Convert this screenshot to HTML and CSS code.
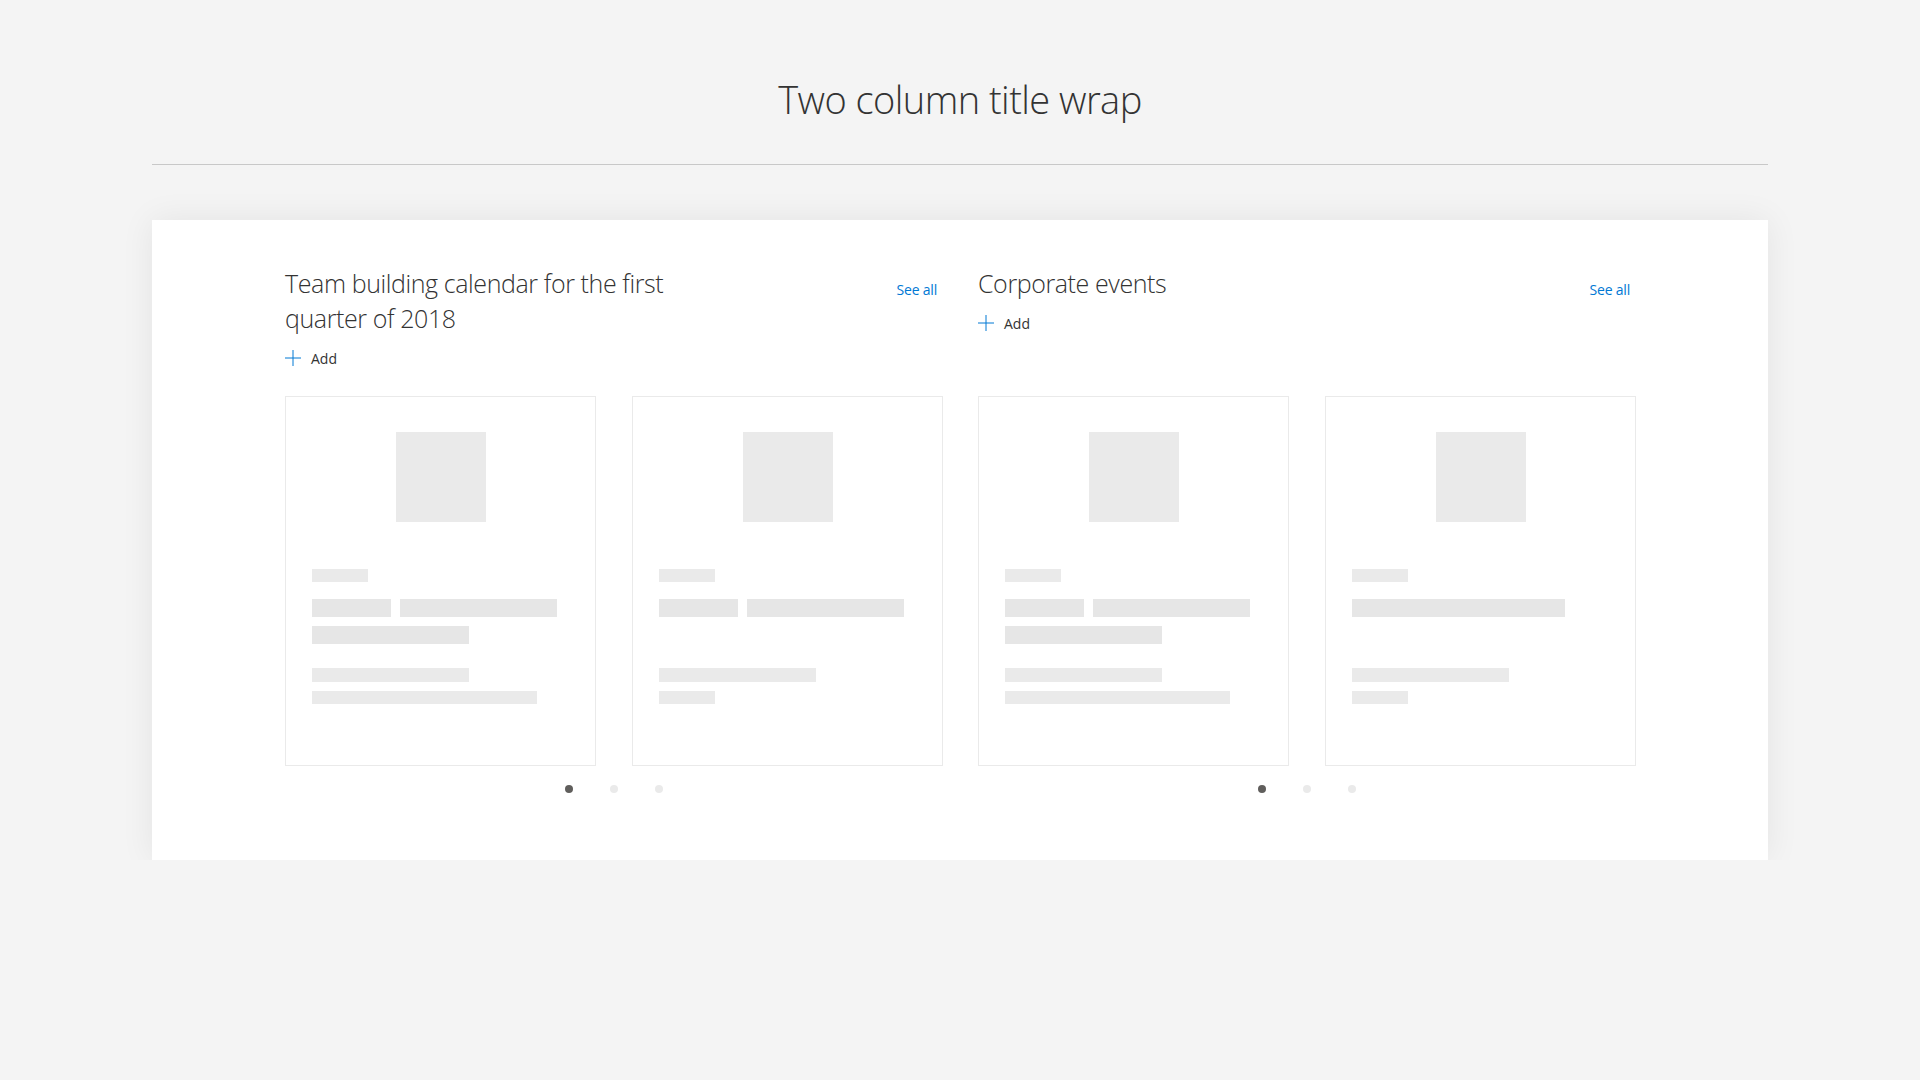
FILE: index.html
```html
<!DOCTYPE html>
<html lang="en">
<head>
<meta charset="utf-8">
<title>Two column title wrap</title>
<link rel="stylesheet" href="styles.css">
</head>
<body>
<div class="page">
  <h1 class="page-title">Two column title wrap</h1>
  <div class="divider"></div>
  <main class="canvas">
    <div class="columns">
      <header class="section-head">
        <div class="head-main">
          <h2 class="section-title wrap">Team building calendar for the first quarter of 2018</h2>
          <button class="add-btn" type="button">
            <svg class="plus" width="16" height="16" viewBox="0 0 16 16" aria-hidden="true"><path d="M8 0V16M0 8H16" stroke="#0078d4" stroke-width="1" fill="none"/></svg>
            <span>Add</span>
          </button>
        </div>
        <a class="see-all" href="#">See all</a>
      </header>
      <header class="section-head">
        <div class="head-main">
          <h2 class="section-title">Corporate events</h2>
          <button class="add-btn" type="button">
            <svg class="plus" width="16" height="16" viewBox="0 0 16 16" aria-hidden="true"><path d="M8 0V16M0 8H16" stroke="#0078d4" stroke-width="1" fill="none"/></svg>
            <span>Add</span>
          </button>
        </div>
        <a class="see-all" href="#">See all</a>
      </header>

      <section class="section-body">
        <div class="cards">
          <div class="card">
            <div class="thumb"></div>
            <div class="lines">
              <div class="row r1"><span class="bar sm w56"></span></div>
              <div class="row r2"><span class="bar lg w79"></span><span class="bar lg w157"></span></div>
              <div class="row r3"><span class="bar lg w157"></span></div>
              <div class="row r4"><span class="bar sm w157"></span></div>
              <div class="row r5"><span class="bar sm w225"></span></div>
            </div>
          </div>
          <div class="card">
            <div class="thumb"></div>
            <div class="lines">
              <div class="row r1"><span class="bar sm w56"></span></div>
              <div class="row r2"><span class="bar lg w79"></span><span class="bar lg w157"></span></div>
              <div class="row r3"></div>
              <div class="row r4"><span class="bar sm w157"></span></div>
              <div class="row r5"><span class="bar sm w56"></span></div>
            </div>
          </div>
        </div>
        <div class="dots"><span class="dot active"></span><span class="dot"></span><span class="dot"></span></div>
      </section>

      <section class="section-body">
        <div class="cards">
          <div class="card">
            <div class="thumb"></div>
            <div class="lines">
              <div class="row r1"><span class="bar sm w56"></span></div>
              <div class="row r2"><span class="bar lg w79"></span><span class="bar lg w157"></span></div>
              <div class="row r3"><span class="bar lg w157"></span></div>
              <div class="row r4"><span class="bar sm w157"></span></div>
              <div class="row r5"><span class="bar sm w225"></span></div>
            </div>
          </div>
          <div class="card">
            <div class="thumb"></div>
            <div class="lines">
              <div class="row r1"><span class="bar sm w56"></span></div>
              <div class="row r2"><span class="bar lg w213"></span></div>
              <div class="row r3"></div>
              <div class="row r4"><span class="bar sm w157"></span></div>
              <div class="row r5"><span class="bar sm w56"></span></div>
            </div>
          </div>
        </div>
        <div class="dots"><span class="dot active"></span><span class="dot"></span><span class="dot"></span></div>
      </section>
    </div>
  </main>
</div>
</body>
</html>
```

FILE: styles.css
```css
* { box-sizing: border-box; }

html, body {
  margin: 0;
  padding: 0;
  background: #f4f4f4;
}

body {
  font-family: "Segoe UI", "Open Sans", "Noto Sans", sans-serif;
  color: #333333;
}

.page {
  width: 1616px;
  margin: 0 auto;
  padding-top: 71px;
}

.page-title {
  margin: 0;
  text-align: center;
  font-size: 38px;
  line-height: 56px;
  font-weight: 300;
  letter-spacing: -0.55px;
  color: #333333;
}

.divider {
  margin-top: 37px;
  height: 1px;
  background: #c8c8c8;
}

.canvas {
  margin-top: 55px;
  background: #ffffff;
  box-shadow: 0 0 32px rgba(0, 0, 0, 0.07);
  padding: 46px 132px 67px 133px;
}

.columns {
  display: grid;
  grid-template-columns: 658px 658px;
  column-gap: 35px;
  row-gap: 28px;
}

.section-head {
  display: flex;
  justify-content: space-between;
  align-items: flex-start;
}

.head-main {
  display: flex;
  flex-direction: column;
  align-items: flex-start;
}

.section-title {
  margin: 0;
  font-size: 25px;
  line-height: 35px;
  font-weight: 300;
  letter-spacing: -0.4px;
  color: #333333;
}

.section-title.wrap {
  max-width: 420px;
}

.add-btn {
  margin-top: 12px;
  padding: 0;
  border: 0;
  background: none;
  display: flex;
  align-items: center;
  gap: 10px;
  height: 20px;
  font-family: inherit;
  font-size: 14px;
  color: #333333;
  cursor: pointer;
}

.plus { display: block; }

.see-all {
  margin-top: 14px;
  margin-right: 6px;
  font-size: 14px;
  line-height: 20px;
  letter-spacing: -0.2px;
  color: #0078d4;
  text-decoration: none;
}

.cards {
  display: flex;
  gap: 36px;
}

.card {
  width: 311px;
  height: 370px;
  border: 1px solid #eaeaea;
  background: #ffffff;
  padding: 35px 26px 0 26px;
}

.thumb {
  width: 90px;
  height: 90px;
  margin: 0 auto;
  background: #eaeaea;
}

.lines {
  margin-top: 47px;
  display: flex;
  flex-direction: column;
}

.row {
  display: flex;
  gap: 9px;
}

.r1 { height: 13px; }
.r2 { height: 18px; margin-top: 17px; }
.r3 { height: 18px; margin-top: 9px; }
.r4 { height: 14px; margin-top: 24px; }
.r5 { height: 13px; margin-top: 9px; }

.bar { display: block; height: 100%; }
.bar.sm { background: #eaeaea; }
.bar.lg { background: #e6e6e6; }

.w56 { width: 56px; }
.w79 { width: 79px; }
.w157 { width: 157px; }
.w213 { width: 213px; }
.w225 { width: 225px; }

.dots {
  display: flex;
  justify-content: center;
  gap: 37px;
  margin-top: 19px;
}

.dot {
  width: 8px;
  height: 8px;
  border-radius: 50%;
  background: #eaeaea;
}

.dot.active { background: #605e5c; }
```
